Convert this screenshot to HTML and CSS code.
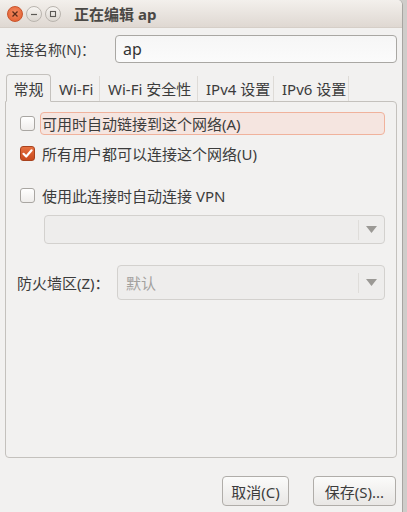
FILE: index.html
```html
<!DOCTYPE html>
<html lang="zh">
<head>
<meta charset="utf-8">
<link rel="stylesheet" href="styles.css">
</head>
<body>
<div class="window">
  <div class="titlebar">
    <div class="wbtns">
      <span class="wbtn close"><svg width="8" height="8" viewBox="0 0 8 8"><path d="M1.5 1.5L6.5 6.5M6.5 1.5L1.5 6.5" stroke="#5a2a18" stroke-width="1.3"/></svg></span>
      <span class="wbtn"><svg width="8" height="8" viewBox="0 0 8 8"><path d="M1 4.5H7" stroke="#5c5a56" stroke-width="1.2"/></svg></span>
      <span class="wbtn"><svg width="8" height="8" viewBox="0 0 8 8"><rect x="1.5" y="1.5" width="5" height="5" fill="none" stroke="#5c5a56" stroke-width="1.1"/></svg></span>
    </div>
    <div class="title">正在编辑 ap</div>
  </div>
  <div class="content">
    <div class="namerow">
      <span class="lbl">连接名称(N)：</span>
      <div class="entry">ap</div>
    </div>
    <div class="notebook">
      <div class="tabs">
        <div class="tab active">常规</div>
        <div class="tab">Wi-Fi</div>
        <div class="tab">Wi-Fi 安全性</div>
        <div class="tab">IPv4 设置</div>
        <div class="tab">IPv6 设置</div>
      </div>
      <div class="panel">
        <div class="check-row">
          <span class="cb"></span>
          <span class="clabel focus">可用时自动链接到这个网络(A)</span>
        </div>
        <div class="check-row second">
          <span class="cb checked"><svg width="13" height="13" viewBox="0 0 13 13"><path d="M2.5 6.8L5.2 9.5L10.6 3.3" fill="none" stroke="#fff" stroke-width="2.2" stroke-linecap="round" stroke-linejoin="round"/></svg></span>
          <span class="clabel">所有用户都可以连接这个网络(U)</span>
        </div>
        <div class="check-row third">
          <span class="cb"></span>
          <span class="clabel">使用此连接时自动连接 VPN</span>
        </div>
        <div class="combo vpn">
          <span class="ctext"></span>
          <span class="carrow"><svg width="11" height="7" viewBox="0 0 11 7"><path d="M0 0H11L5.5 7Z" fill="#9b9995"/></svg></span>
        </div>
        <div class="fwrow">
          <span class="lbl">防火墙区(Z)：</span>
          <div class="combo fw">
            <span class="ctext">默认</span>
            <span class="carrow"><svg width="11" height="7" viewBox="0 0 11 7"><path d="M0 0H11L5.5 7Z" fill="#9b9995"/></svg></span>
          </div>
        </div>
      </div>
    </div>
    <div class="actions">
      <button class="btn cancel">取消(C)</button>
      <button class="btn save">保存(S)...</button>
    </div>
  </div>
</div>
</body>
</html>
```

FILE: styles.css
```css
html, body {
  margin: 0;
  padding: 0;
}
body {
  width: 407px;
  height: 512px;
  background: #cfcdca;
  font-family: "Noto Sans", "Noto Sans CJK SC", sans-serif;
  font-size: 15px;
  color: #3c3c3c;
  overflow: hidden;
}
.window {
  width: 402px;
  height: 512px;
  background: #f2f1f0;
  border-right: 1px solid #a8a5a1;
  border-top-right-radius: 5px;
  display: flex;
  flex-direction: column;
}
.titlebar {
  height: 28px;
  flex: none;
  display: flex;
  align-items: center;
  background: linear-gradient(#f3f0ec, #dfd8d2);
  border-top-right-radius: 5px;
  box-sizing: border-box;
  border-bottom: 1px solid #d5cec7;
}
.wbtns {
  display: flex;
  gap: 3px;
  margin-left: 7px;
}
.wbtn {
  width: 16px;
  height: 16px;
  border-radius: 50%;
  box-sizing: border-box;
  border: 1px solid #b9b4ae;
  background: linear-gradient(#f7f5f2, #dcd7d1);
  display: flex;
  align-items: center;
  justify-content: center;
}
.wbtn.close {
  border-color: #c9532a;
  background: radial-gradient(circle at 50% 40%, #f58b61, #e05a2b);
}
.title {
  margin-left: 13px;
  font-weight: bold;
  font-size: 15px;
  color: #4a4845;
}
.content {
  flex: 1;
  display: flex;
  flex-direction: column;
  padding: 7px 5px 6px 5px;
}
.namerow {
  display: flex;
  align-items: center;
  height: 28px;
}
.namerow .lbl {
  margin-left: 1px;
  width: 109px;
  white-space: nowrap;
  font-size: 14px;
}
.entry {
  flex: 1;
  height: 28px;
  box-sizing: border-box;
  border: 1px solid #a9a7a3;
  border-radius: 4px;
  background: linear-gradient(#f6f6f6, #fbfbfb);
  padding-left: 7px;
  display: flex;
  align-items: center;
  font-size: 16px;
  color: #333;
}
.notebook {
  margin-top: 10px;
  display: flex;
  flex-direction: column;
}
.tabs {
  display: flex;
  align-items: flex-end;
  height: 28px;
  padding-left: 1px;
  position: relative;
  z-index: 1;
}
.tab {
  height: 25px;
  box-sizing: border-box;
  padding: 0 0 0 8px;
  display: flex;
  align-items: center;
  border-right: 1px solid #dedbd7;
  color: #3c3c3c;
  white-space: nowrap;
}
.tab.active {
  height: 28px;
  width: 45px;
  justify-content: center;
  padding: 0;
  border: 1px solid #c4c1bd;
  border-bottom: 1px solid #f2f1f0;
  border-radius: 4px 4px 0 0;
  background: #f2f1f0;
  margin-bottom: -1px;
}
.tab:nth-child(2) { width: 49px; }
.tab:nth-child(3) { width: 98px; }
.tab:nth-child(4) { width: 76px; }
.tab:nth-child(5) { width: 75px; }
.panel {
  height: 357px;
  box-sizing: border-box;
  border: 1px solid #c4c1bd;
  border-radius: 0 4px 4px 4px;
  display: flex;
  flex-direction: column;
  padding: 10px 11px 0 14px;
}
.check-row {
  display: flex;
  align-items: center;
  height: 23px;
}
.check-row.second {
  margin-top: 7px;
}
.check-row.third {
  margin-top: 19px;
}
.cb {
  width: 15px;
  height: 15px;
  flex: none;
  box-sizing: border-box;
  border: 1px solid #a9a6a2;
  border-radius: 3px;
  background: linear-gradient(#ffffff, #efedeb);
  display: flex;
  align-items: center;
  justify-content: center;
}
.cb.checked {
  border-color: #a8421d;
  background: linear-gradient(#e6703f, #c94a1e);
}
.clabel {
  margin-left: 6px;
  height: 23px;
  box-sizing: border-box;
  display: flex;
  align-items: center;
  padding-left: 1px;
  color: #3c3c3c;
  white-space: nowrap;
}
.clabel.focus {
  flex: 1;
  margin-left: 5px;
  padding-left: 1px;
  border: 1px solid #f0b29c;
  border-radius: 4px;
  background: #f5e5e0;
}
.combo {
  display: flex;
  align-items: center;
  box-sizing: border-box;
  border: 1px solid #d3d1ce;
  border-radius: 4px;
  background: #eeedec;
}
.combo.vpn {
  margin-top: 8px;
  margin-left: 24px;
  height: 29px;
}
.ctext {
  flex: 1;
  padding-left: 8px;
  color: #a3a19e;
}
.carrow {
  width: 25px;
  height: 20px;
  border-left: 1px solid #dfddda;
  display: flex;
  align-items: center;
  justify-content: center;
}
.fwrow {
  display: flex;
  align-items: center;
  margin-top: 21px;
  margin-left: -3px;
}
.fwrow .lbl {
  width: 100px;
  flex: none;
  white-space: nowrap;
}
.combo.fw {
  flex: 1;
  height: 35px;
}
.actions {
  margin-top: auto;
  display: flex;
  justify-content: flex-end;
  gap: 24px;
  padding-right: 1px;
}
.btn {
  font-family: "Noto Sans", "Noto Sans CJK SC", sans-serif;
  font-size: 15px;
  color: #3c3c3c;
  height: 30px;
  box-sizing: border-box;
  border: 1px solid #b0ada9;
  border-radius: 4px;
  background: linear-gradient(#fbfbfa, #e9e7e5);
  padding: 0;
}
.btn.cancel { width: 67px; }
.btn.save { width: 83px; }
```
